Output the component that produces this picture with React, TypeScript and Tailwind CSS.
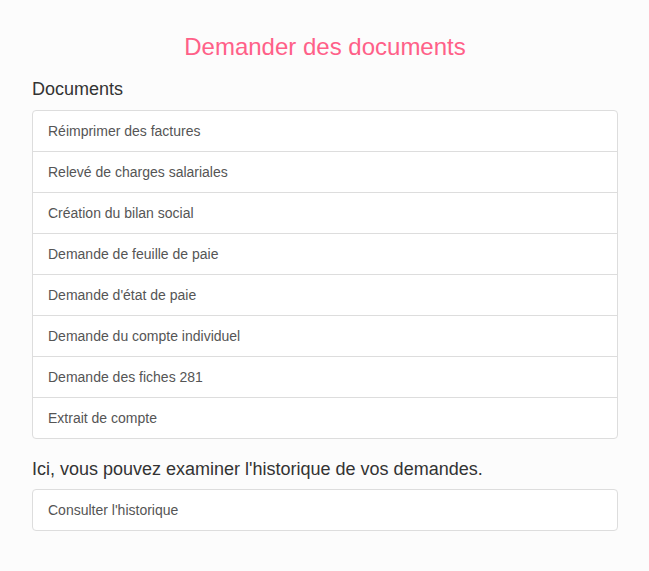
import React from "react";

const docs = [
  "Réimprimer des factures",
  "Relevé de charges salariales",
  "Création du bilan social",
  "Demande de feuille de paie",
  "Demande d'état de paie",
  "Demande du compte individuel",
  "Demande des fiches 281",
  "Extrait de compte",
];

export default function App() {
  return (
    <div
      className="min-h-[571px] w-full bg-[#fcfcfc] text-[#333333]"
      style={{ fontFamily: '"Liberation Sans", Arial, sans-serif' }}
    >
      <div className="pl-[32px] pr-[31px] pt-[34px] pb-[40px]">
        <h1 className="text-center text-[24px] leading-[26px] text-[#ff6088] font-normal">
          Demander des documents
        </h1>
        <h2 className="mt-[19px] text-[18px] leading-[20px] font-normal text-[#333333]">
          Documents
        </h2>
        <div className="mt-[11px] rounded-[4px] border border-[#dddddd] bg-white">
          {docs.map((d, i) => (
            <div
              key={d}
              className={
                "px-[15px] py-[10px] text-[14px] leading-[20px] text-[#555555] " +
                (i > 0 ? "border-t border-[#dddddd]" : "")
              }
            >
              {d}
            </div>
          ))}
        </div>
        <h2 className="mt-[20px] text-[18px] leading-[20px] font-normal text-[#333333]">
          Ici, vous pouvez examiner l'historique de vos demandes.
        </h2>
        <div className="mt-[10px] rounded-[4px] border border-[#dddddd] bg-white">
          <div className="px-[15px] py-[10px] text-[14px] leading-[20px] text-[#555555]">
            Consulter l'historique
          </div>
        </div>
      </div>
    </div>
  );
}
